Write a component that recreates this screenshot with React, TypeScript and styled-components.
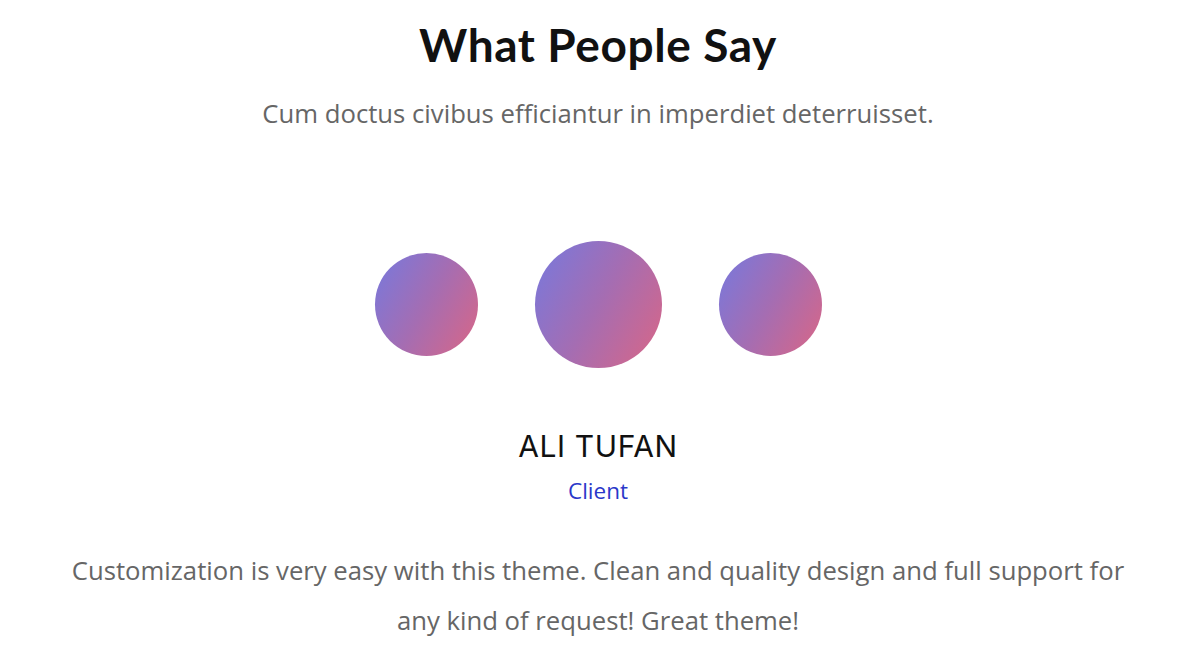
import React from "react";
import styled, { createGlobalStyle } from "styled-components";

const Global = createGlobalStyle`
  html, body { margin: 0; padding: 0; background: #fff; }
  body { font-family: "Open Sans", "Liberation Sans", sans-serif; }
`;

const Section = styled.section`
  display: flex;
  flex-direction: column;
  align-items: center;
  padding: 18px 4px 0 0;
  text-align: center;
`;

const Title = styled.h2`
  margin: 0;
  font-family: "Lato", "Noto Sans", sans-serif;
  font-weight: 700;
  font-size: 46px;
  line-height: 54px;
  color: #111;
  letter-spacing: 0.6px;
`;

const Subtitle = styled.p`
  margin: 27px 0 0;
  font-size: 25.7px;
  line-height: 30px;
  color: #666;
`;

const Avatars = styled.div`
  display: flex;
  align-items: center;
  gap: 57px;
  margin-top: 112px;
`;

const Avatar = styled.div<{ $size: number }>`
  width: ${(p) => p.$size}px;
  height: ${(p) => p.$size}px;
  border-radius: 50%;
  background: linear-gradient(120deg, #7679de 0%, #a56db2 50%, #da6685 100%);
`;

const Name = styled.h3`
  margin: 60px 0 0;
  font-family: "Inter", "Lato", sans-serif;
  font-weight: 400;
  font-size: 30px;
  line-height: 36px;
  letter-spacing: 0.6px;
  color: #111;
`;

const Role = styled.span`
  margin-top: 13px;
  font-size: 22.5px;
  line-height: 28px;
  color: #2a37c9;
`;

const Quote = styled.p`
  margin: 41px 0 0;
  max-width: 1080px;
  font-size: 25.7px;
  line-height: 50px;
  color: #666;
`;

export default function App() {
  return (
    <>
      <Global />
      <Section>
        <Title>What People Say</Title>
        <Subtitle>Cum doctus civibus efficiantur in imperdiet deterruisset.</Subtitle>
        <Avatars>
          <Avatar $size={103} />
          <Avatar $size={127} />
          <Avatar $size={103} />
        </Avatars>
        <Name>ALI TUFAN</Name>
        <Role>Client</Role>
        <Quote>
          Customization is very easy with this theme. Clean and quality design and full support for any kind of
          request! Great theme!
        </Quote>
      </Section>
    </>
  );
}
